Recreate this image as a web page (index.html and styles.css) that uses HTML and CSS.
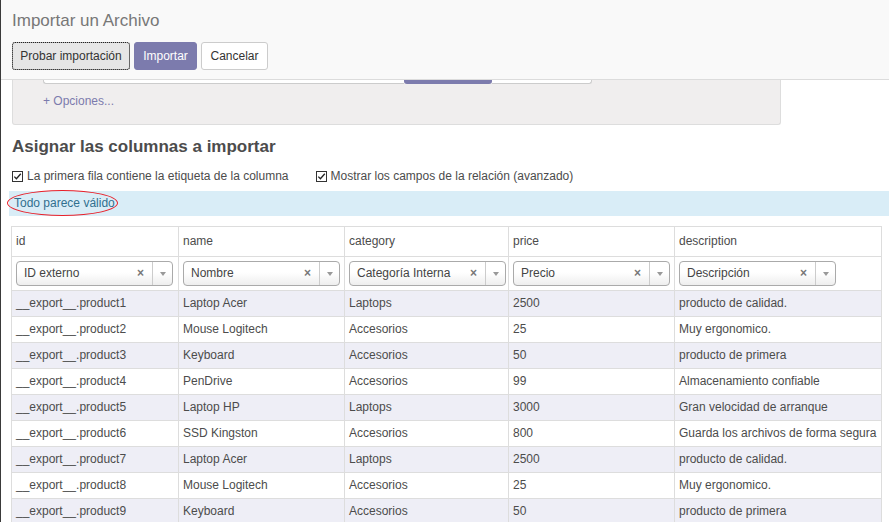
FILE: index.html
```html
<!DOCTYPE html>
<html lang="es">
<head>
<meta charset="utf-8">
<title>Importar un Archivo</title>
<link rel="stylesheet" href="styles.css">
</head>
<body>
<div class="page">
  <div class="modal-header">
    <div class="modal-title">Importar un Archivo</div>
    <div class="btn-row">
      <button class="btn btn-default btn-focus">Probar importación</button>
      <button class="btn btn-primary">Importar</button>
      <button class="btn btn-white">Cancelar</button>
    </div>
  </div>
  <div class="content">
    <div class="options-box">
      <div class="file-row"><span class="file-input"></span><span class="file-btn"></span><span class="file-input2"></span></div>
      <a class="options-link">+ Opciones...</a>
    </div>
    <h2 class="section-title">Asignar las columnas a importar</h2>
    <div class="checks">
      <label class="check"><svg class="cb" width="11" height="11" viewBox="0 0 11 11"><rect x="0.5" y="0.5" width="10" height="10" fill="#fff" stroke="#333"/><path d="M2.3 5.6 L4.4 7.7 L8.8 2.8" fill="none" stroke="#222" stroke-width="1.3"/></svg>La primera fila contiene la etiqueta de la columna</label>
      <label class="check"><svg class="cb" width="11" height="11" viewBox="0 0 11 11"><rect x="0.5" y="0.5" width="10" height="10" fill="#fff" stroke="#333"/><path d="M2.3 5.6 L4.4 7.7 L8.8 2.8" fill="none" stroke="#222" stroke-width="1.3"/></svg>Mostrar los campos de la relación (avanzado)</label>
    </div>
    <div class="alert"><span class="alert-text">Todo parece válido</span></div>
    <table class="grid">
      <colgroup><col class="c1"><col class="c2"><col class="c3"><col class="c4"><col class="c5"></colgroup>
      <thead>
        <tr class="head"><th>id</th><th>name</th><th>category</th><th>price</th><th>description</th></tr>
        <tr class="sel-row">
          <td><div class="select"><span class="sel-text">ID externo</span><span class="sel-x">×</span><span class="sel-arrow"></span></div></td>
          <td><div class="select"><span class="sel-text">Nombre</span><span class="sel-x">×</span><span class="sel-arrow"></span></div></td>
          <td><div class="select"><span class="sel-text">Categoría Interna</span><span class="sel-x">×</span><span class="sel-arrow"></span></div></td>
          <td><div class="select"><span class="sel-text">Precio</span><span class="sel-x">×</span><span class="sel-arrow"></span></div></td>
          <td><div class="select"><span class="sel-text">Descripción</span><span class="sel-x">×</span><span class="sel-arrow"></span></div></td>
        </tr>
      </thead>
      <tbody>
        <tr class="odd"><td>__export__.product1</td><td>Laptop Acer</td><td>Laptops</td><td>2500</td><td>producto de calidad.</td></tr>
        <tr><td>__export__.product2</td><td>Mouse Logitech</td><td>Accesorios</td><td>25</td><td>Muy ergonomico.</td></tr>
        <tr class="odd"><td>__export__.product3</td><td>Keyboard</td><td>Accesorios</td><td>50</td><td>producto de primera</td></tr>
        <tr><td>__export__.product4</td><td>PenDrive</td><td>Accesorios</td><td>99</td><td>Almacenamiento confiable</td></tr>
        <tr class="odd"><td>__export__.product5</td><td>Laptop HP</td><td>Laptops</td><td>3000</td><td>Gran velocidad de arranque</td></tr>
        <tr><td>__export__.product6</td><td>SSD Kingston</td><td>Accesorios</td><td>800</td><td>Guarda los archivos de forma segura</td></tr>
        <tr class="odd"><td>__export__.product7</td><td>Laptop Acer</td><td>Laptops</td><td>2500</td><td>producto de calidad.</td></tr>
        <tr><td>__export__.product8</td><td>Mouse Logitech</td><td>Accesorios</td><td>25</td><td>Muy ergonomico.</td></tr>
        <tr class="odd"><td>__export__.product9</td><td>Keyboard</td><td>Accesorios</td><td>50</td><td>producto de primera</td></tr>
      </tbody>
    </table>
  </div>
</div>
</body>
</html>
```

FILE: styles.css
```css
html, body {
  margin: 0;
  padding: 0;
  background: #fff;
  overflow: hidden;
}
body {
  font-family: "Liberation Sans", Arial, sans-serif;
  font-size: 12px;
  color: #4c4c4c;
}
.page {
  border-left: 1px solid #3a3a3a;
  height: 522px;
  overflow: hidden;
}
.modal-header {
  background: #f9f9f9;
  border-bottom: 1px solid #dcdcdc;
  padding: 10px 11px 9px;
  height: 60px;
}
.modal-title {
  font-size: 17px;
  line-height: 22px;
  color: #777;
}
.btn-row {
  display: flex;
  gap: 4px;
  margin-top: 10px;
}
.btn {
  font-family: "Liberation Sans", Arial, sans-serif;
  font-size: 12px;
  height: 28px;
  padding: 0 4px;
  border-radius: 3px;
  border: 1px solid #ccc;
  line-height: 26px;
  margin: 0;
  white-space: nowrap;
  text-align: center;
}
.btn-default {
  background: #e6e6e6;
  color: #333;
  border-color: #adadad;
  width: 118px;
}
.btn-focus {
  outline: 1px dotted #222;
  outline-offset: -1px;
}
.btn-primary {
  background: #7c7bad;
  border-color: #7c7bad;
  color: #fff;
  width: 63px;
}
.btn-white {
  background: #fff;
  color: #333;
  width: 67px;
}
.options-box {
  margin-left: 11px;
  width: 737px;
  background: #f0eeee;
  border: 1px solid #ddd;
  border-top: none;
  border-radius: 0 0 3px 3px;
  padding: 0 0 14px 30px;
}
.file-row {
  display: flex;
  height: 4px;
}
.file-input {
  width: 360px;
  background: #fff;
  border: 1px solid #ccc;
  border-top: none;
  border-right: none;
  border-radius: 0 0 0 3px;
  height: 3px;
}
.file-btn {
  width: 88px;
  background: #7c7bad;
  height: 4px;
  border-radius: 0 0 3px 3px;
}
.file-input2 {
  width: 99px;
  background: #fff;
  border: 1px solid #ccc;
  border-top: none;
  border-left: none;
  border-radius: 0 0 3px 0;
  height: 3px;
}
.options-link {
  display: block;
  margin-top: 8px;
  line-height: 18px;
  color: #7c7bad;
}
.section-title {
  margin: 12px 0 0 11px;
  font-size: 17px;
  line-height: 20px;
  font-weight: bold;
  color: #4c4c4c;
}
.checks {
  display: flex;
  gap: 27px;
  margin: 10px 0 0 11px;
  line-height: 18px;
}
.check {
  display: flex;
  align-items: center;
  gap: 4px;
  color: #4c4c4c;
}
.cb {
  display: block;
}
.alert {
  margin: 6px 0 0 8px;
  background: #d9edf7;
  padding: 4px 5px;
  line-height: 17px;
  color: #31708f;
}
.alert-text {
  position: relative;
}
.alert-text::after {
  content: "";
  position: absolute;
  left: -7px;
  right: -3px;
  top: -6px;
  bottom: -6px;
  border: 1.5px solid #e8202a;
  border-radius: 50%;
}
.grid {
  margin: 10px 0 0 10px;
  border-collapse: collapse;
  width: 870px;
  table-layout: fixed;
  color: #4c4c4c;
}
.c1 { width: 167px; }
.c2 { width: 166px; }
.c3 { width: 164px; }
.c4 { width: 166px; }
.c5 { width: 207px; }
.grid th, .grid td {
  border: 1px solid #ddd;
  text-align: left;
  font-weight: normal;
  white-space: nowrap;
  overflow: hidden;
}
.grid th {
  padding: 6px 4px;
  line-height: 17px;
}
.grid td {
  padding: 4px 4px;
  line-height: 17px;
}
.grid tr.odd td {
  background: #eeeef6;
}
.sel-row td {
  padding: 4px 4px;
}
.select {
  display: flex;
  align-items: center;
  width: 157px;
  height: 25px;
  box-sizing: border-box;
  border: 1px solid #aaa;
  border-radius: 4px;
  background: linear-gradient(#fff 45%, #eee);
  color: #444;
}
.sel-text {
  flex: 1;
  padding-left: 7px;
  overflow: hidden;
}
.sel-x {
  color: #777;
  font-weight: bold;
  font-size: 12px;
  width: 10px;
  margin-right: 5px;
}
.sel-arrow {
  width: 19px;
  align-self: stretch;
  border-left: 1px solid #ccc;
  position: relative;
}
.sel-arrow::after {
  content: "";
  position: absolute;
  left: 7px;
  top: 10px;
  border-left: 3px solid transparent;
  border-right: 3px solid transparent;
  border-top: 4px solid #999;
}
```
